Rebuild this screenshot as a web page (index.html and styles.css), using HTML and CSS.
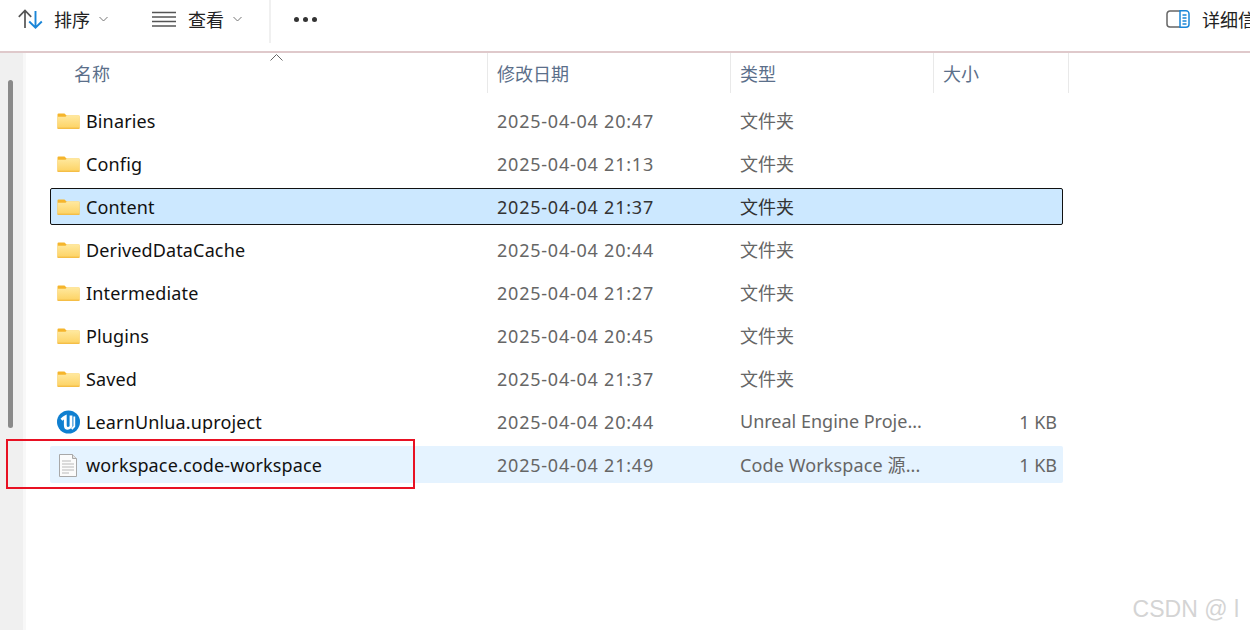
FILE: index.html
```html
<!DOCTYPE html>
<html lang="zh">
<head>
<meta charset="utf-8">
<title>文件夹</title>
<link rel="stylesheet" href="styles.css">
</head>
<body>
<div class="toolbar">
  <div class="tool tool-sort">
    <svg class="ico" width="26" height="22" viewBox="0 0 26 22" fill="none"><path d="M7 20V2.500M.8 8.800L7 2.500l6.200 6.300" stroke="#555" stroke-width="1.700"/><path d="M17.500 3v16.500M11.200 13.500l6.300 6.200 6.300-6.200" stroke="#1a86d8" stroke-width="1.900"/></svg>
    <span class="tool-label">排序</span>
    <svg class="chev" width="9" height="6" viewBox="0 0 9 6" fill="none"><path d="M.5 1l4 4 4-4" stroke="#777"/></svg>
  </div>
  <div class="tool tool-view">
    <svg class="ico" width="24" height="16" viewBox="0 0 24 16" fill="none"><path d="M0 1.500h24M0 6h24M0 10.500h24M0 15h24" stroke="#555" stroke-width="1.300"/></svg>
    <span class="tool-label">查看</span>
    <svg class="chev" width="9" height="6" viewBox="0 0 9 6" fill="none"><path d="M.5 1l4 4 4-4" stroke="#777"/></svg>
  </div>
  <div class="tool-sep"></div>
  <div class="more"><i></i><i></i><i></i></div>
  <div class="details">
    <svg width="24" height="18" viewBox="0 0 24 18" fill="none"><path d="M14 1H4a3 3 0 0 0-3 3v10a3 3 0 0 0 3 3h10" stroke="#666" stroke-width="1.500"/><path d="M14 .8h6a3 3 0 0 1 3 3v10.400a3 3 0 0 1-3 3h-6z" stroke="#1a86d8" stroke-width="1.500" fill="#fff"/><path d="M16.500 5h4M16.500 8h4M16.500 11h4M16.500 14h4" stroke="#1a86d8" stroke-width="1.300"/></svg>
    <span class="tool-label">详细信息</span>
  </div>
</div>
<div class="body">
  <div class="rail"><div class="thumb"></div></div>
  <div class="rail-gap"></div>
  <div class="main">
    <div class="head">
      <div class="hcell hname">名称<svg class="sort-up" width="13" height="7" viewBox="0 0 13 7" fill="none"><path d="M.5 6.500l6-6 6 6" stroke="#666"/></svg></div>
      <div class="hcell">修改日期</div>
      <div class="hcell">类型</div>
      <div class="hcell">大小</div>
    </div>
    <div class="rows">
      <div class="row"><div class="name"><svg class="folder" width="23" height="18"><use href="#folder"/></svg>Binaries</div><div class="date">2025-04-04 20:47</div><div class="type">文件夹</div><div class="size"></div></div>
      <div class="row"><div class="name"><svg class="folder" width="23" height="18"><use href="#folder"/></svg>Config</div><div class="date">2025-04-04 21:13</div><div class="type">文件夹</div><div class="size"></div></div>
      <div class="row selected"><div class="name"><svg class="folder" width="23" height="18"><use href="#folder"/></svg>Content</div><div class="date">2025-04-04 21:37</div><div class="type">文件夹</div><div class="size"></div></div>
      <div class="row"><div class="name"><svg class="folder" width="23" height="18"><use href="#folder"/></svg>DerivedDataCache</div><div class="date">2025-04-04 20:44</div><div class="type">文件夹</div><div class="size"></div></div>
      <div class="row"><div class="name"><svg class="folder" width="23" height="18"><use href="#folder"/></svg>Intermediate</div><div class="date">2025-04-04 21:27</div><div class="type">文件夹</div><div class="size"></div></div>
      <div class="row"><div class="name"><svg class="folder" width="23" height="18"><use href="#folder"/></svg>Plugins</div><div class="date">2025-04-04 20:45</div><div class="type">文件夹</div><div class="size"></div></div>
      <div class="row"><div class="name"><svg class="folder" width="23" height="18"><use href="#folder"/></svg>Saved</div><div class="date">2025-04-04 21:37</div><div class="type">文件夹</div><div class="size"></div></div>
      <div class="row"><div class="name"><svg class="file-ico" width="23" height="24" viewBox="0 0 23 24" fill="none"><circle cx="11.500" cy="12" r="11.500" fill="#0f7fd0"/><path d="M4.500 9.800C6 8.200 7 7.400 8.300 6.800v8.400c0 2.200 1 3.100 2.500 3.100 1.400 0 2.400-.8 3.200-1.800V5.500" stroke="#fff" stroke-width="2.800"/><path d="M17.300 6.500v9.800l-2.600 2.900" stroke="#fff" stroke-width="1.800"/></svg>LearnUnlua.uproject</div><div class="date">2025-04-04 20:44</div><div class="type">Unreal Engine Proje...</div><div class="size">1 KB</div></div>
      <div class="row hover"><div class="name"><svg class="file-ico" width="23" height="24" viewBox="0 0 23 24" fill="none"><path d="M2.500 1.500h13l4 4v18h-17z" fill="#fbfbfb" stroke="#a8a8a8"/><path d="M15.500 1.500v4h4" fill="#e4e4e4" stroke="#a8a8a8"/><path d="M5 8h9M5 11h12M5 14h12M5 17h12M5 20h7" stroke="#d0d0d0" stroke-width="1.300"/></svg>workspace.code-workspace</div><div class="date">2025-04-04 21:49</div><div class="type type-wide">Code Workspace 源...</div><div class="size">1 KB</div></div>
    </div>
  </div>
</div>
<div class="redbox"></div>
<div class="watermark">CSDN @ l</div>
<svg class="defs" width="0" height="0">
  <defs>
    <linearGradient id="fg" x1="0" y1="0" x2="0" y2="1"><stop offset="0" stop-color="#ffe9a0"/><stop offset="1" stop-color="#fdd262"/></linearGradient>
    <symbol id="folder" viewBox="0 0 23 18">
      <path d="M.5 2.500a1 1 0 0 1 1-1h6l2 2h12a1 1 0 0 1 1 1v11a1.500 1.500 0 0 1-1.500 1.500H2a1.500 1.500 0 0 1-1.500-1.500z" fill="#f5b52c"/>
      <path d="M.5 4.800h8l1.800-1.500H22.500v12a1.500 1.500 0 0 1-1.500 1.500H2a1.500 1.500 0 0 1-1.500-1.500z" fill="url(#fg)"/>
      <path d="M.5 16.200h22" stroke="#f2b840"/>
    </symbol>
  </defs>
</svg>
</body>
</html>
```
FILE: styles.css
```css
* { box-sizing: border-box; }
html, body { margin: 0; height: 100%; }
body {
  width: 1250px;
  height: 630px;
  overflow: hidden;
  position: relative;
  background: #fff;
  display: flex;
  flex-direction: column;
  font-family: "Noto Sans", "Noto Sans CJK SC", sans-serif;
  font-size: 18px;
  color: #666;
}
.toolbar {
  height: 53px;
  flex: none;
  border-bottom: 2px solid #dfc9cb;
  display: flex;
  align-items: flex-start;
  color: #222;
  overflow: hidden;
}
.tool { height: 38px; display: flex; align-items: center; }
.tool-sort { padding-left: 18px; width: 152px; }
.tool-view { padding-left: 0; width: 117px; }
.tool-sort .ico { margin-right: 10px; }
.tool-view .ico { margin-right: 12px; }
.tool-label { font-family: "Noto Sans CJK SC", sans-serif; font-size: 18px; white-space: nowrap; }
.chev { margin-left: 9px; }
.tool-sep { width: 2px; height: 43px; background: #f0f0f0; }
.more { height: 39px; width: 60px; margin-left: 23px; display: flex; align-items: center; gap: 4px; }
.more i { width: 5px; height: 5px; border-radius: 50%; background: #333; }
.details {
  margin-left: auto;
  margin-right: -28px;
  height: 38px;
  display: flex;
  align-items: center;
  gap: 12px;
  width: 112px;
  flex: none;
}
.body { flex: 1; display: flex; min-height: 0; }
.rail { width: 23px; flex: none; background: #f0f0f0; padding: 27px 0 0 8px; }
.thumb { width: 5px; height: 348px; background: #8a8a8a; border-radius: 3px; }
.rail-gap { width: 3px; flex: none; background: #f8f8f8; }
.main { flex: 1; padding-left: 24px; min-width: 0; position: relative; }
.head, .row { display: grid; grid-template-columns: 438px 243px 203px 135px; }
.head { height: 40px; color: #5b6f8a; }
.hcell { padding-left: 9px; border-right: 1px solid #e9e9e9; display: flex; align-items: center; }
.hname { padding-left: 24px; position: relative; }
.sort-up { position: absolute; left: 220px; top: 1px; }
.rows { margin-top: 9px; display: flex; flex-direction: column; gap: 6px; width: 1013px; }
.row {
  height: 37px;
  grid-template-columns: 438px 243px 203px 129px;
  align-items: center;
  border: 1px solid transparent;
  border-radius: 2px;
}
.row > div { padding-left: 8px; white-space: nowrap; overflow: hidden; }
.row > .date { letter-spacing: .77px; }
.row > .type { padding-bottom: 2px; }
.row > .type-wide { letter-spacing: .12px; }
.row > .name { color: #111; display: flex; align-items: center; padding-left: 6px; letter-spacing: .14px; }
.folder, .file-ico { margin-right: 6px; flex: none; }
.row > .size { text-align: right; padding: 0 7px 0 0; }
.selected { background: #cce8ff; border-color: #111; color: #333; }
.selected > div:nth-child(n+2) { color: #333; }
.hover { background: #e5f3ff; }
.redbox {
  position: absolute;
  left: 6px;
  top: 439px;
  width: 409px;
  height: 50px;
  border: 2px solid #e81123;
}
.watermark {
  position: absolute;
  right: 11px;
  top: 596px;
  font-family: "Liberation Sans", sans-serif;
  font-size: 23px;
  color: #d4d4d4;
}
.defs { position: absolute; }
```
